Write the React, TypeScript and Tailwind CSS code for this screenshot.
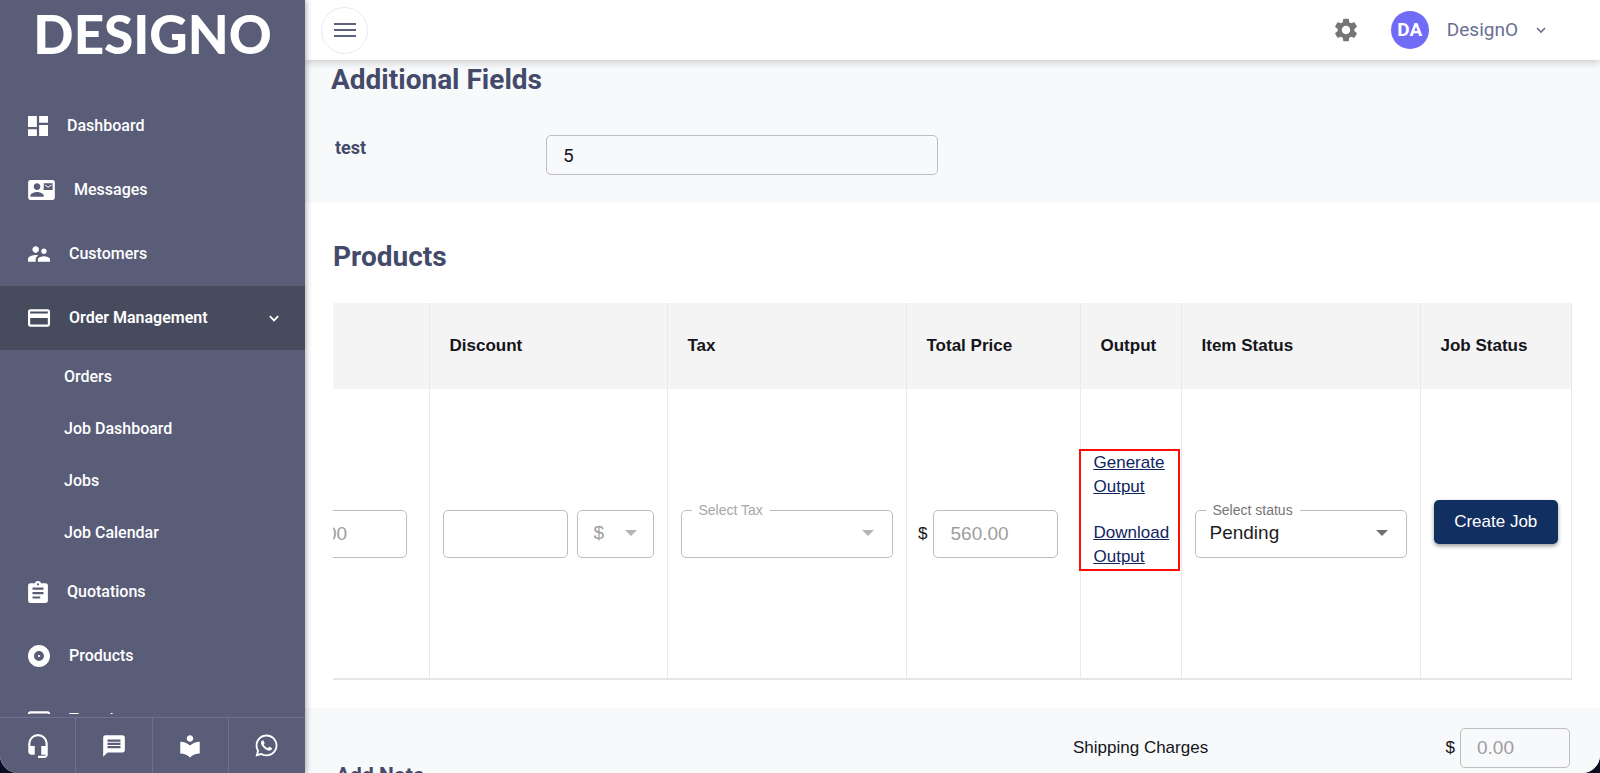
import type { ReactNode } from "react";
import { MdHeadsetMic, MdLocalLibrary, MdMessage, MdSettings } from "react-icons/md";
import { FaWhatsapp } from "react-icons/fa";

type NavItem = {
  label: string;
  viewBox: string;
  width: number;
  height: number;
  path: string;
};

const topItems: NavItem[] = [
  {
    label: "Dashboard",
    viewBox: "3 3 18 18",
    width: 20,
    height: 20,
    path: "M3 13h8V3H3v10zm0 8h8v-6H3v6zm10 0h8V11h-8v10zm0-18v6h8V3h-8z",
  },
  {
    label: "Messages",
    viewBox: "0 3 24 18",
    width: 27,
    height: 20,
    path: "M21 8V7l-3 2-3-2v1l3 2 3-2zm1-5H2C.9 3 0 3.9 0 5v14c0 1.1.9 2 2 2h20c1.1 0 1.99-.9 1.99-2L24 5c0-1.1-.9-2-2-2zM8 6c1.66 0 3 1.34 3 3s-1.34 3-3 3-3-1.34-3-3 1.34-3 3-3zm6 12H2v-1c0-2 4-3.1 6-3.1s6 1.1 6 3.1v1zm8-6h-8V6h8v6z",
  },
  {
    label: "Customers",
    viewBox: "2 5 20 14",
    width: 22,
    height: 16,
    path: "M16.5 12c1.38 0 2.49-1.12 2.49-2.5S17.88 7 16.5 7C15.12 7 14 8.12 14 9.5s1.12 2.5 2.5 2.5zM9 11c1.66 0 2.99-1.34 2.99-3S10.66 5 9 5C7.34 5 6 6.34 6 8s1.34 3 3 3zm7.5 3c-1.83 0-5.5.92-5.5 2.75V19h11v-2.25c0-1.83-3.67-2.75-5.5-2.75zM9 13c-2.33 0-7 1.17-7 3.5V19h7v-2.25c0-.85.33-2.34 2.37-3.47C10.5 13.1 9.66 13 9 13z",
  },
];

const cardPath =
  "M20 4H4c-1.11 0-1.99.89-1.99 2L2 18c0 1.11.89 2 2 2h16c1.11 0 2-.89 2-2V6c0-1.11-.89-2-2-2zm0 14H4v-6h16v6zm0-10H4V6h16v2z";

const orderItem: NavItem = {
  label: "Order Management",
  viewBox: "2 4 20 16",
  width: 22,
  height: 18,
  path: cardPath,
};

const subItems = ["Orders", "Job Dashboard", "Jobs", "Job Calendar"];

const bottomItems: NavItem[] = [
  {
    label: "Quotations",
    viewBox: "3 1 18 20",
    width: 20,
    height: 22,
    path: "M19 3h-4.18C14.4 1.84 13.3 1 12 1c-1.3 0-2.4.84-2.82 2H5c-1.1 0-2 .9-2 2v14c0 1.1.9 2 2 2h14c1.1 0 2-.9 2-2V5c0-1.1-.9-2-2-2zm-7 0c.55 0 1 .45 1 1s-.45 1-1 1-1-.45-1-1 .45-1 1-1zm2 14H7v-2h7v2zm3-4H7v-2h10v2zm0-4H7V7h10v2z",
  },
  {
    label: "Products",
    viewBox: "2 2 20 20",
    width: 22,
    height: 22,
    path: "M12 2C6.48 2 2 6.48 2 12s4.48 10 10 10 10-4.48 10-10S17.52 2 12 2zm0 14.5c-2.49 0-4.5-2.01-4.5-4.5S9.51 7.5 12 7.5s4.5 2.01 4.5 4.5-2.01 4.5-4.5 4.5zm0-5.5c-.55 0-1 .45-1 1s.45 1 1 1 1-.45 1-1-.45-1-1-1z",
  },
  { label: "Templates", viewBox: "2 4 20 16", width: 22, height: 18, path: cardPath },
];

function NavLink({ item, active, children }: { item: NavItem; active?: boolean; children?: ReactNode }) {
  return (
    <a
      href="#"
      className={
        active
          ? "flex h-16 shrink-0 items-center gap-[19px] bg-[#474b5e] pl-7 pr-[26px] font-semibold"
          : "flex h-16 shrink-0 items-center gap-[19px] pl-7 pr-[26px]"
      }
    >
      <svg viewBox={item.viewBox} width={item.width} height={item.height} fill="currentColor" aria-hidden="true">
        <path d={item.path} />
      </svg>
      <span>{item.label}</span>
      {children}
    </a>
  );
}

function Sidebar() {
  return (
    <aside className="z-20 flex w-[305px] shrink-0 flex-col bg-[#595d78] text-base font-medium text-white shadow-[1px_0_6px_rgba(0,0,0,0.35)]">
      <div className="flex h-[94px] shrink-0 items-start justify-center pt-1 font-['Lato',sans-serif] text-[53px] font-black leading-[60px]">
        DESIGNO
      </div>
      <nav className="flex min-h-0 flex-1 flex-col overflow-hidden">
        {topItems.map((item) => (
          <NavLink key={item.label} item={item} />
        ))}
        <NavLink item={orderItem} active>
          <svg viewBox="0 0 12 8" width="10" height="7" fill="none" stroke="currentColor" strokeWidth="2.2" className="ml-auto" aria-hidden="true">
            <path d="M1 1.2l5 5 5-5" />
          </svg>
        </NavLink>
        <div className="flex flex-col py-px">
          {subItems.map((label) => (
            <a key={label} href="#" className="flex h-[52px] items-center pl-16">
              {label}
            </a>
          ))}
        </div>
        {bottomItems.map((item) => (
          <NavLink key={item.label} item={item} />
        ))}
      </nav>
      <div className="mt-[3px] grid h-14 shrink-0 grid-cols-4 divide-x divide-[#6d718d] border-t border-[#6d718d]">
        <button aria-label="Support" className="flex items-center justify-center">
          <MdHeadsetMic size={26} />
        </button>
        <button aria-label="Chat" className="flex items-center justify-center">
          <MdMessage size={26} />
        </button>
        <button aria-label="Guide" className="flex items-center justify-center">
          <MdLocalLibrary size={26} />
        </button>
        <button aria-label="WhatsApp" className="flex items-center justify-center">
          <FaWhatsapp size={25} />
        </button>
      </div>
    </aside>
  );
}

function Header() {
  return (
    <header className="z-10 flex h-[60px] shrink-0 items-center bg-white pl-4 pr-[54px] shadow-[0_2px_8px_rgba(0,0,0,0.2)]">
      <button aria-label="Toggle menu" className="flex size-[47px] items-center justify-center rounded-full border border-[#e9e9f2]">
        <svg viewBox="0 0 22 16" width="22" height="16" stroke="#5d6280" strokeWidth="2" aria-hidden="true">
          <path d="M0 2h22M0 8h22M0 14h22" />
        </svg>
      </button>
      <div className="ml-auto flex items-center">
        <button aria-label="Settings" className="text-[#757575]">
          <MdSettings size={28} />
        </button>
        <span className="ml-[31px] flex size-[38px] items-center justify-center rounded-full bg-[#716cf8] text-[19px] font-bold text-white">
          DA
        </span>
        <button className="ml-[18px] flex items-center gap-[18px] text-[19px] leading-6 text-[#6a7091]">
          DesignO
          <svg viewBox="0 0 10 7" width="10" height="7" fill="none" stroke="currentColor" strokeWidth="1.6" aria-hidden="true">
            <path d="M1 1l4 4 4-4" />
          </svg>
        </button>
      </div>
    </header>
  );
}

function Caret({ className }: { className: string }) {
  return (
    <svg viewBox="0 0 12 6" width="12" height="6" fill="currentColor" className={className} aria-hidden="true">
      <path d="M0 0h12l-6 6z" />
    </svg>
  );
}

const th = "border-r border-[#e9e9ee] px-5 text-left font-bold";
const td = "border-r border-[#e9e9ee]";
const priceInput = "h-12 w-[125px] shrink-0 rounded-[5px] border border-[#bdbdbd] bg-transparent px-[17px] text-[19px] text-[#9e9e9e]";

function ProductsTable() {
  return (
    <table className="mt-[26px] w-full table-fixed border-b-2 border-[#e6e6e6] font-['Liberation_Sans',Arial,sans-serif] text-[17px] text-[#15151a]">
      <colgroup>
        <col className="w-[96px]" />
        <col className="w-[238px]" />
        <col className="w-[239px]" />
        <col className="w-[174px]" />
        <col className="w-[101px]" />
        <col className="w-[239px]" />
        <col />
      </colgroup>
      <thead>
        <tr className="h-[86px] bg-[#f4f4f4]">
          <th className={th} aria-label="Price" />
          <th className={th}>Discount</th>
          <th className={th}>Tax</th>
          <th className={th}>Total Price</th>
          <th className={th}>Output</th>
          <th className={th}>Item Status</th>
          <th className={th}>Job Status</th>
        </tr>
      </thead>
      <tbody>
        <tr className="h-[290px]">
          <td className="overflow-hidden border-r border-[#e9e9ee]">
            <div className="flex justify-end pr-[22px]">
              <input aria-label="Price" defaultValue="56.00" className={priceInput} />
            </div>
          </td>
          <td className={td}>
            <div className="flex justify-between px-[13px]">
              <input aria-label="Discount" className={priceInput} />
              <div className="relative">
                <select aria-label="Discount type" className="h-12 w-[77px] appearance-none rounded-[5px] border border-[#bdbdbd] bg-transparent px-4 text-[19px] text-[#9e9e9e]">
                  <option>$</option>
                </select>
                <Caret className="pointer-events-none absolute right-[17px] top-5 text-[#b5b5b5]" />
              </div>
            </div>
          </td>
          <td className={td}>
            <div className="relative mx-[13px]">
              <select id="tax" defaultValue="" className="h-12 w-full appearance-none rounded-[5px] border border-[#bdbdbd] bg-transparent px-4 text-[19px]">
                <option value="" />
              </select>
              <label htmlFor="tax" className="absolute -top-2 left-[11px] bg-white px-[7px] text-sm leading-4 text-[#a6a6a6]">
                Select Tax
              </label>
              <Caret className="pointer-events-none absolute right-[19px] top-5 text-[#b5b5b5]" />
            </div>
          </td>
          <td className={td}>
            <div className="flex items-center justify-end gap-[5px] pr-[22px]">
              <span>$</span>
              <input aria-label="Total price" defaultValue="560.00" className={priceInput} />
            </div>
          </td>
          <td className={td}>
            <div className="pb-12">
              <div className="relative z-10 -ml-0.5 mr-px flex flex-col gap-[22px] border-2 border-[#ff0d05] pl-[13px] leading-6 text-[#10255f] underline">
                <a href="#">
                  Generate
                  <br />
                  Output
                </a>
                <a href="#">
                  Download
                  <br />
                  Output
                </a>
              </div>
            </div>
          </td>
          <td className={td}>
            <div className="relative mx-[13px]">
              <select id="status" className="h-12 w-full appearance-none rounded-[5px] border border-[#bdbdbd] bg-transparent px-3.5 text-[19px] text-[#1d1d1f]">
                <option>Pending</option>
              </select>
              <label htmlFor="status" className="absolute -top-2 left-[11px] bg-white px-[7px] text-sm leading-4 text-[#757575]">
                Select status
              </label>
              <Caret className="pointer-events-none absolute right-[19px] top-5 text-[#707070]" />
            </div>
          </td>
          <td className={td}>
            <div className="px-[13px] pb-6">
              <button className="h-11 w-full rounded-[5px] bg-[#122f62] text-white shadow-[0_2px_4px_rgba(0,0,0,0.4)]">
                Create Job
              </button>
            </div>
          </td>
        </tr>
      </tbody>
    </table>
  );
}

export default function App() {
  return (
    <div className="h-screen bg-[#0b0e22] font-['Roboto',sans-serif]">
      <div className="flex h-full overflow-hidden rounded-b-[18px] bg-white">
        <Sidebar />
        <div className="flex min-w-0 flex-1 flex-col">
          <Header />
          <main className="min-h-0 flex-1 overflow-hidden">
            <section className="bg-[#f8f9fb] px-[26px] pb-7">
              <h2 className="text-[28px] font-bold leading-10 text-[#444a69]">Additional Fields</h2>
              <div className="mt-[35px] flex items-start pl-1">
                <label htmlFor="test" className="w-[211px] text-lg font-bold leading-[26px] text-[#444a69]">
                  test
                </label>
                <input
                  id="test"
                  defaultValue="5"
                  className="h-10 w-[392px] rounded-[5px] border border-[#bdbdbd] bg-transparent px-4 text-[19px] text-[#15151a]"
                />
              </div>
            </section>
            <section className="bg-white px-7 pb-7 pt-[34px]">
              <h2 className="text-[28px] font-bold leading-10 text-[#444a69]">Products</h2>
              <ProductsTable />
            </section>
            <section className="flex bg-[#f8f9fb] pb-8 pl-[31px] pr-[30px] pt-5">
              <h3 className="flex-1 pt-[33px] text-[21px] font-bold leading-7 text-[#444a69]">Add Note</h3>
              <div className="flex w-[497px] items-start justify-between font-['Liberation_Sans',Arial,sans-serif] text-[17px] text-[#15151a]">
                <label htmlFor="shipping" className="leading-10">
                  Shipping Charges
                </label>
                <div className="flex items-center gap-[5px]">
                  <span>$</span>
                  <input
                    id="shipping"
                    defaultValue="0.00"
                    className="h-10 w-[110px] rounded-[5px] border border-[#bdbdbd] bg-transparent px-4 text-[19px] text-[#9e9e9e]"
                  />
                </div>
              </div>
            </section>
          </main>
        </div>
      </div>
    </div>
  );
}
